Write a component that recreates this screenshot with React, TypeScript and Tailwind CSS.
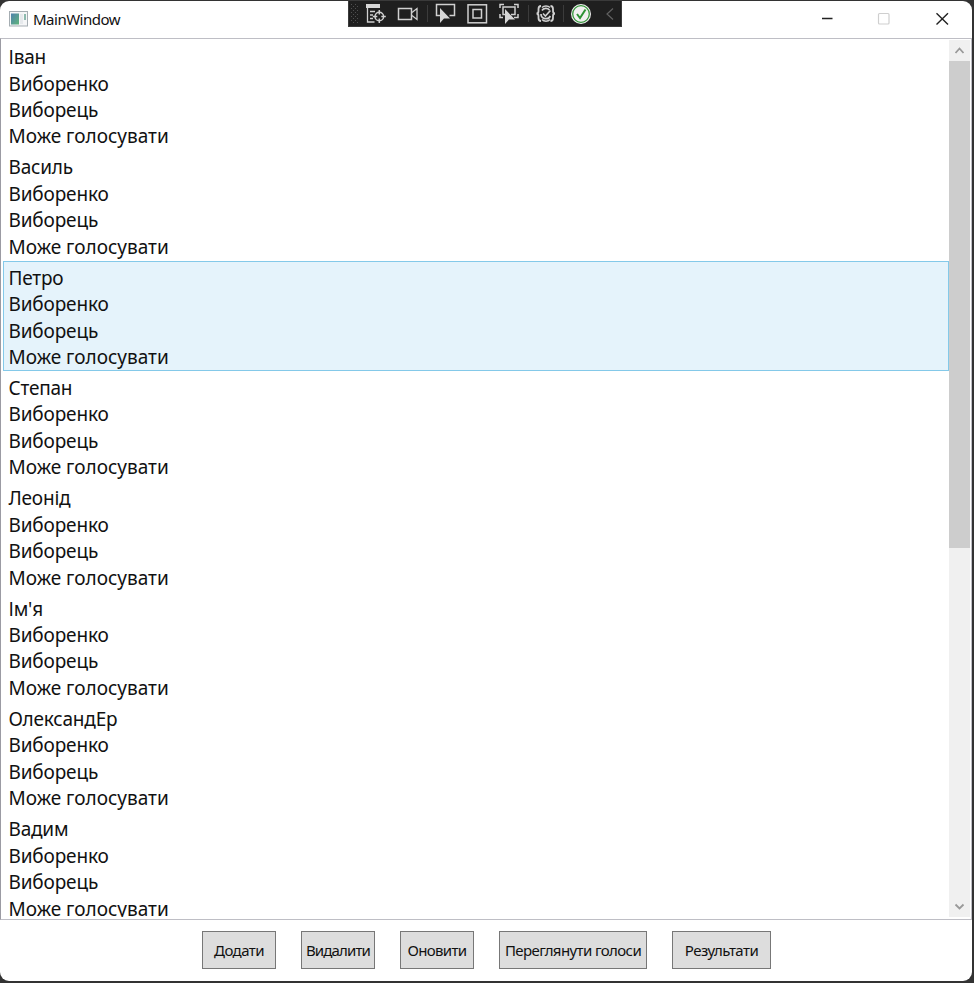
const names = ["Іван", "Василь", "Петро", "Степан", "Леонід", "Ім'я", "ОлександЕр", "Вадим"];

const buttons = [
  { label: "Додати", size: "w-[74px]", text: "tracking-[-0.55px]" },
  { label: "Видалити", size: "w-[74px]", text: "tracking-[-0.85px]" },
  { label: "Оновити", size: "w-[74px]", text: "tracking-[-0.65px]" },
  { label: "Переглянути голоси", size: "w-[148px]", text: "tracking-[-0.6px]" },
  { label: "Результати", size: "w-[99px]", text: "tracking-[-0.55px]" },
];

function DebugToolbar() {
  return (
    <div className="absolute left-[348px] top-0 h-[27px] w-[274px] border border-[#3a3a3a] bg-[#1f1f1f]">
      <svg className="block" width="272" height="25" viewBox="349 1 272 25" fill="none" stroke="#d0d0d0" strokeWidth="1.5">
        <g fill="#505050" stroke="none">
          {[4, 8, 12, 16, 20].map((y) => (
            <g key={y}>
              <rect x="351" y={y} width="1" height="1" />
              <rect x="355" y={y} width="1" height="1" />
              <rect x="353" y={y + 2} width="1" height="1" />
              <rect x="357" y={y + 2} width="1" height="1" />
            </g>
          ))}
        </g>
        <rect x="366" y="4" width="14" height="4" fill="#d6d6d6" stroke="none" />
        <path d="M367.500 8v14h7M370 11.500h5M370 15h3M370 18.500h3" strokeWidth="1.300" />
        <circle cx="379.300" cy="16.500" r="4.300" />
        <path d="M379.300 10v4.500M379.300 18.500v4.500M372.800 16.500h4.500M381.300 16.500h4.500" />
        <rect x="398.500" y="8.500" width="13" height="11" />
        <path d="M412 12.500l5-4v11l-5-4" strokeWidth="1.300" />
        <path d="M427.500 5v17M528.500 5v17M563.500 5v17" stroke="#3b3b3b" strokeWidth="1" />
        <path d="M440 15.500h-3.500v-11h18v11h-5" />
        <path d="M440 8v15l4-4.500h6z" fill="#d6d6d6" stroke="none" />
        <rect x="468" y="4.800" width="18.500" height="18" />
        <rect x="473" y="9.500" width="8.500" height="8.500" />
        <path d="M500 8v-3.500h4M514 4.500h4v3.500M500 14v3.500h3M518 14v3.500h-4M505 14.500h-2v-7.500h12v7.500h-4" />
        <path d="M505 9v15l4-4.500h6z" fill="#d6d6d6" stroke="none" />
        <path d="M541 6c-2 0-2.500 1-2.500 3v2c0 1.500-.5 2.500-2 2.500 1.500 0 2 1 2 2.500v2c0 2 .5 3 2.500 3M550.500 6c2 0 2.500 1 2.500 3v2c0 1.500.5 2.500 2 2.500-1.500 0-2 1-2 2.500v2c0 2-.5 3-2.500 3" strokeWidth="1.800" />
        <path d="M542 10.500c1.500-2.600 5.500-2.800 7.500-.5M541 14c0 5 7 6.500 9.300 2" strokeWidth="1.700" />
        <path d="M543 13.500l2.400 2.500 5-5.500M542 7.500c2-2 6-2 8 0M542 19.500c2 2.300 6 2.300 8 0" strokeWidth="1.600" />
        <circle cx="581" cy="14" r="10" fill="#f0f0f0" stroke="none" />
        <circle cx="581" cy="14" r="8.300" stroke="#34963a" strokeWidth="1.300" />
        <path d="M577 14l3 4 5.500-8.500" stroke="#2c9234" strokeWidth="2" />
        <path d="M613 8.500l-6 5.500 6 5.500" stroke="#626262" strokeWidth="1.200" />
      </svg>
    </div>
  );
}

function TitleBar() {
  return (
    <header className="flex h-[37px] shrink-0 items-center justify-between">
      <div className="flex items-center pl-[9px] pb-[2px]">
        <svg width="19" height="16" viewBox="0 0 19 16">
          <defs>
            <linearGradient id="app" x1="0" y1="0" x2="1" y2="1">
              <stop stopColor="#4e82ad" />
              <stop offset="1" stopColor="#60b47b" />
            </linearGradient>
          </defs>
          <rect x=".5" y=".5" width="18" height="14.500" fill="#f5f6f7" stroke="#a5adb2" />
          <rect x="2" y="2.500" width="8" height="11" fill="url(#app)" />
          <rect x="11" y="3" width="3" height="10" fill="#e6e9ec" />
          <rect x="15" y="3" width="2" height="6" fill="#8dbaae" />
        </svg>
        <span className="ml-[5px] text-[15px] leading-5 tracking-[-0.5px]">MainWindow</span>
      </div>
      <svg width="150" height="37" viewBox="822 1 150 37" fill="none">
        <path d="M820 18.500h12.500" stroke="#222" strokeWidth="1.300" />
        <rect x="878.500" y="13.500" width="10.500" height="10.500" rx="1" stroke="#cfcfcf" strokeWidth="1.200" />
        <path d="M936.500 13.200l11.500 11.300M948 13.200l-11.500 11.300" stroke="#222" strokeWidth="1.400" />
      </svg>
    </header>
  );
}

function Scrollbar() {
  return (
    <div className="mt-[1px] mb-[2px] flex w-[21px] shrink-0 flex-col bg-[#f0f0f0]">
      <svg className="shrink-0" width="21" height="21" viewBox="0 0 21 21" fill="none">
        <path d="M6.500 13l4-4.500 4 4.500" stroke="#999" strokeWidth="1.800" />
      </svg>
      <div className="h-[487px] bg-[#cdcdcd]" />
      <svg className="mt-auto shrink-0" width="21" height="21" viewBox="0 0 21 21" fill="none">
        <path d="M6.500 8.500l4 4 4-4" stroke="#999" strokeWidth="1.800" />
      </svg>
    </div>
  );
}

export default function App() {
  return (
    <div className="relative h-[983px] w-[974px] overflow-hidden bg-[#333] pt-px font-['Noto_Sans',sans-serif] text-[#111]">
      <main className="flex h-[980px] w-[972px] flex-col overflow-hidden rounded-[9px] bg-white">
        <TitleBar />
        <section className="flex h-[882px] shrink-0 border border-[#bebec5] border-l-[#9b9ba3] pr-px">
          <ul className="mb-[2px] min-w-0 flex-1 overflow-hidden pt-[1.400px] pl-[2px]">
            {names.map((name) => (
              <li
                key={name}
                className={
                  "h-[110.300px] border pr-[5px] pl-[4.500px] pt-[2.700px] text-[19px] leading-[26.450px] whitespace-nowrap " +
                  (name === "Петро" ? "border-[#84c9e9] bg-[#e5f3fb]" : "border-transparent")
                }
              >
                <p className="tracking-[-0.2px]">{name}</p>
                <p className="tracking-[-0.15px]">Виборенко</p>
                <p className="tracking-[-0.15px]">Виборець</p>
                <p>Може голосувати</p>
              </li>
            ))}
          </ul>
          <Scrollbar />
        </section>
        <footer className="flex flex-1 items-start justify-center gap-[25px] pt-[11px] pl-px">
          {buttons.map((b) => (
            <button
              key={b.label}
              className={"flex h-[38px] shrink-0 items-center justify-center border border-[#777] bg-[#ddd] text-[15px] whitespace-nowrap " + b.size + " " + b.text}
            >
              {b.label}
            </button>
          ))}
        </footer>
      </main>
      <DebugToolbar />
    </div>
  );
}
